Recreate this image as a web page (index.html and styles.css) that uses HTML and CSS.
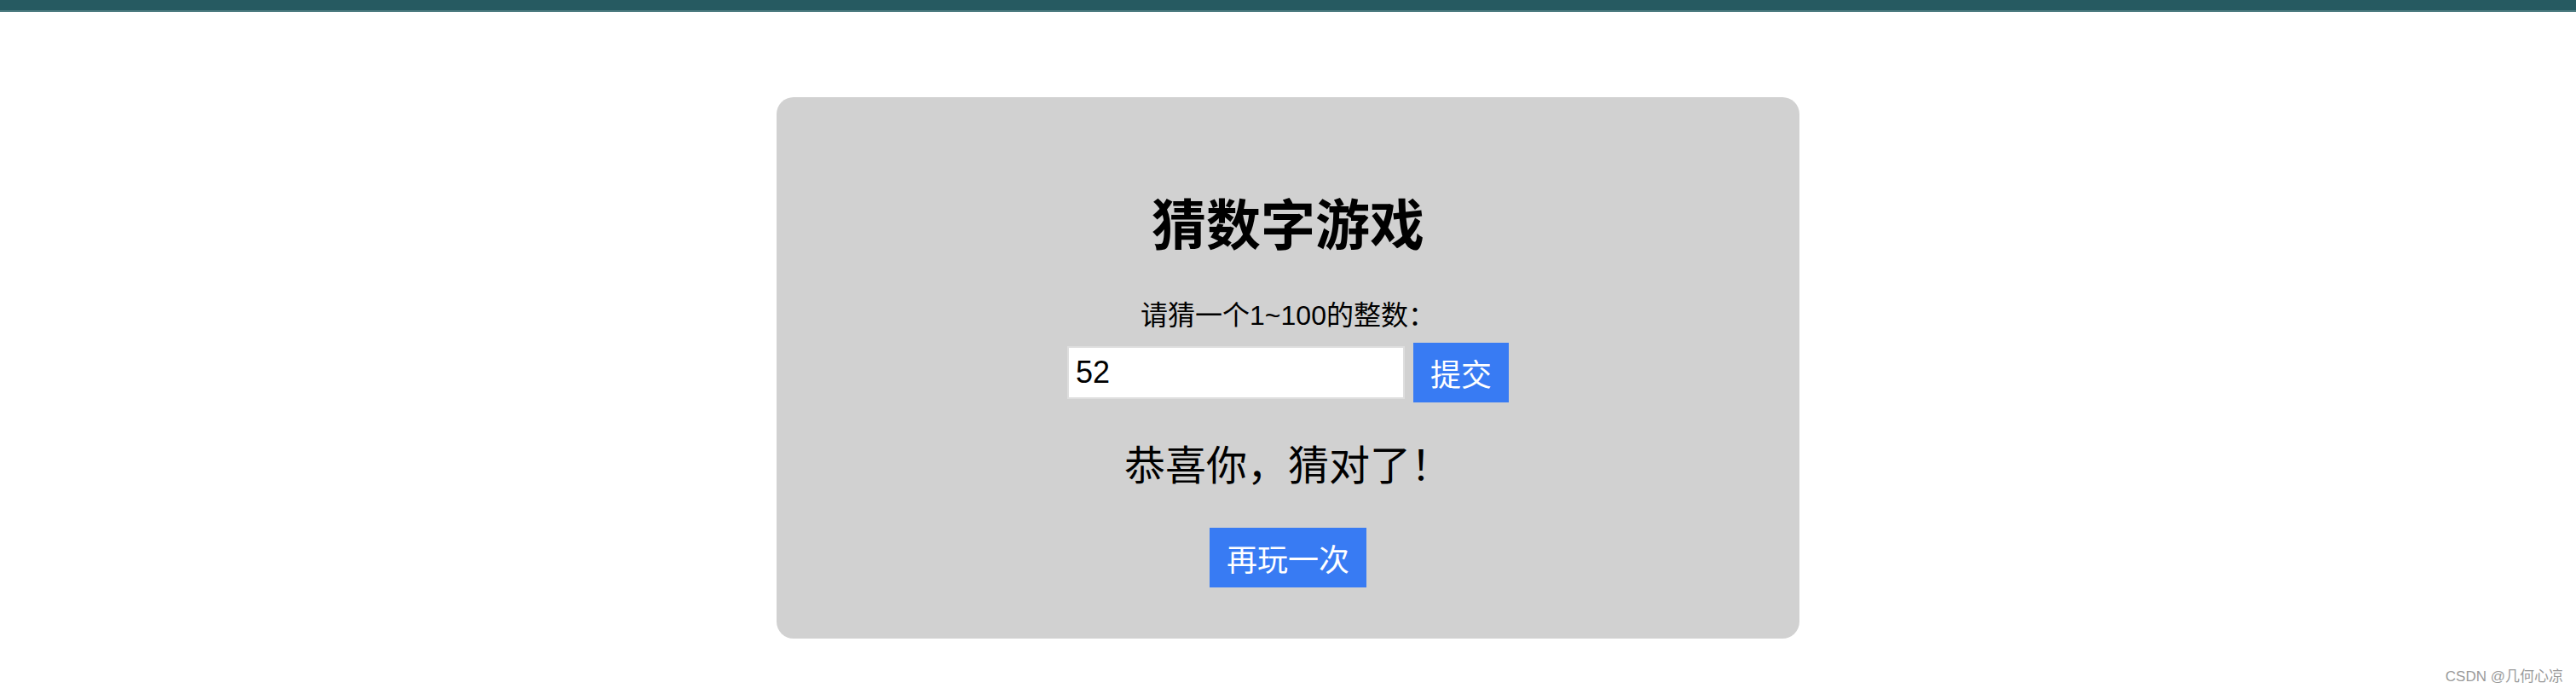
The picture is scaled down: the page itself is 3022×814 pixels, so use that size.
FILE: index.html
```html
<!DOCTYPE html>
<html lang="zh-CN">
<head>
<meta charset="utf-8">
<title>猜数字游戏</title>
<link rel="stylesheet" href="styles.css">
</head>
<body>
<div class="topbar"></div>
<main class="page">
  <section class="card">
    <h1 class="title">猜数字游戏</h1>
    <p class="prompt">请猜一个1~100的整数：</p>
    <div class="guess-row">
      <input class="guess-input" type="text" value="52">
      <button class="btn btn-submit">提交</button>
    </div>
    <p class="result">恭喜你，猜对了！</p>
    <button class="btn btn-replay">再玩一次</button>
  </section>
</main>
<div class="watermark">CSDN @几何心凉</div>
</body>
</html>
```

FILE: styles.css
```css
html, body {
  margin: 0;
  padding: 0;
  background: #ffffff;
  height: 100%;
}

body {
  font-family: "Liberation Sans", "Noto Sans CJK SC", sans-serif;
  color: #000;
  position: relative;
  overflow: hidden;
}

.topbar {
  height: 12px;
  background: #265a61;
  border-bottom: 2px solid #4d7c81;
}

.page {
  display: flex;
  justify-content: center;
  padding-top: 100px;
}

.card {
  width: 1200px;
  box-sizing: border-box;
  background: #d1d1d1;
  border-radius: 20px;
  padding: 113px 0 60px;
  display: flex;
  flex-direction: column;
  align-items: center;
}

.title {
  margin: 0;
  font-family: "Noto Sans CJK SC", sans-serif;
  font-size: 64px;
  font-weight: 700;
  line-height: 64px;
}

.prompt {
  margin: 63px 0 0;
  font-size: 32px;
  line-height: 32px;
}

.guess-row {
  margin-top: 16px;
  display: flex;
  align-items: center;
  gap: 10px;
}

.guess-input {
  box-sizing: border-box;
  width: 396px;
  height: 62px;
  border: 2px solid #dedede;
  background: #fff;
  padding: 0 8px;
  font-family: "Liberation Sans", sans-serif;
  font-size: 36px;
  color: #000;
  outline: none;
}

.btn {
  box-sizing: border-box;
  height: 70px;
  border: none;
  background: #387bf3;
  color: #fff;
  font-family: "Noto Sans CJK SC", sans-serif;
  font-size: 36px;
  line-height: 70px;
  padding: 0 20px;
  cursor: pointer;
}

.result {
  margin: 46px 0 0;
  font-family: "Noto Sans CJK SC", sans-serif;
  font-size: 48px;
  line-height: 48px;
}

.btn-replay {
  margin-top: 53px;
}

.watermark {
  position: absolute;
  right: 15px;
  bottom: 10px;
  font-size: 17px;
  color: #9a9a9a;
}
```
